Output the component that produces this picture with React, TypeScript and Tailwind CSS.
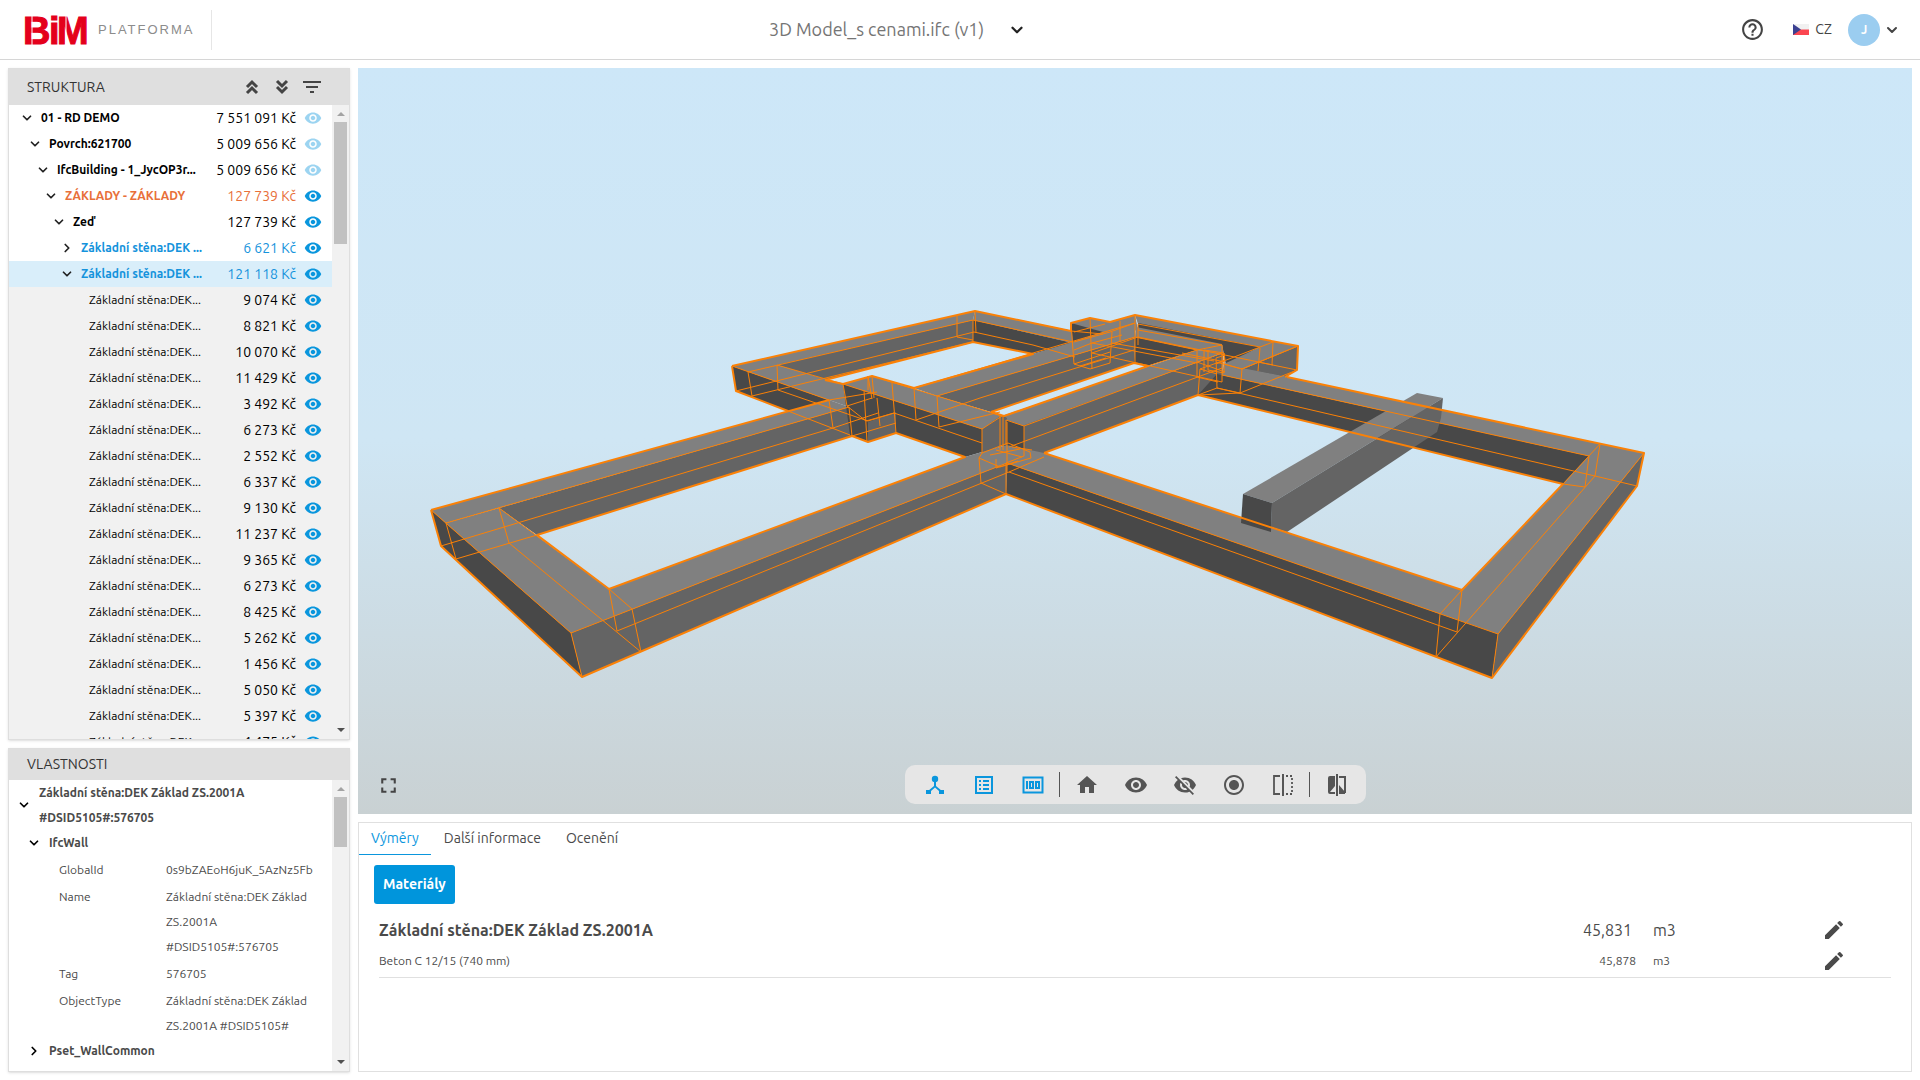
import { useState } from 'react';
import clsx from 'clsx';
import { ChevronDown, ChevronRight } from 'lucide-react';
import {
    MdEdit,
    MdFilterList,
    MdFullscreen,
    MdHelpOutline,
    MdHome,
    MdRadioButtonChecked,
    MdVisibility,
    MdVisibilityOff,
} from 'react-icons/md';

type TreeItem = {
    name: string;
    price: string;
    level: number;
    open?: boolean;
    tone?: 'orange' | 'blue';
    faded?: boolean;
    selected?: boolean;
};

const tree: TreeItem[] = [
    { name: '01 - RD DEMO', price: '7 551 091 Kč', level: 0, open: true, faded: true },
    { name: 'Povrch:621700', price: '5 009 656 Kč', level: 1, open: true, faded: true },
    { name: 'IfcBuilding - 1_JycOP3r...', price: '5 009 656 Kč', level: 2, open: true, faded: true },
    { name: 'ZÁKLADY - ZÁKLADY', price: '127 739 Kč', level: 3, open: true, tone: 'orange' },
    { name: 'Zeď', price: '127 739 Kč', level: 4, open: true },
    { name: 'Základní stěna:DEK ...', price: '6 621 Kč', level: 5, open: false, tone: 'blue' },
    { name: 'Základní stěna:DEK ...', price: '121 118 Kč', level: 5, open: true, tone: 'blue', selected: true },
];

const walls = [
    '9 074', '8 821', '10 070', '11 429', '3 492', '6 273', '2 552', '6 337', '9 130',
    '11 237', '9 365', '6 273', '8 425', '5 262', '1 456', '5 050', '5 397', '4 475',
];

const indents = ['pl-[9px]', 'pl-[17px]', 'pl-[25px]', 'pl-[33px]', 'pl-[41px]', 'pl-[49px]'];

const properties = [
    { label: 'GlobalId', lines: ['0s9bZAEoH6juK_5AzNz5Fb'] },
    { label: 'Name', lines: ['Základní stěna:DEK Základ', 'ZS.2001A', '#DSID5105#:576705'] },
    { label: 'Tag', lines: ['576705'] },
    { label: 'ObjectType', lines: ['Základní stěna:DEK Základ', 'ZS.2001A #DSID5105#'] },
];

function Logo() {
    return (
        <svg width="62" height="32" viewBox="0 0 62 32" className="overflow-visible" role="img" aria-label="BiM">
            <text
                x="-1 25 33"
                y="30"
                fontFamily="'Liberation Sans', sans-serif"
                fontWeight="700"
                fontSize="38"
                fill="#e4001b"
                stroke="#e4001b"
                strokeWidth="1"
            >
                BiM
            </text>
            <path d="M8 0v32M42 0v32" stroke="#fff" strokeWidth="1" />
        </svg>
    );
}

function Flag() {
    return (
        <svg width="16" height="11" viewBox="0 0 16 11">
            <path fill="#f1f1f1" d="M0 0h16v6H0z" />
            <path fill="#fb4650" d="M0 5.5h16V11H0z" />
            <path fill="#3c4191" d="M0 0l8 5.5L0 11z" />
        </svg>
    );
}

function Header() {
    return (
        <header className="flex h-[60px] shrink-0 items-center border-b border-[#d6d6d6] bg-white px-5">
            <div className="flex flex-1 items-center">
                <a href="#" className="flex items-center gap-2 pl-1 text-[#8c8c8c]">
                    <Logo />
                    <span className="pl-1 font-['Liberation_Sans',sans-serif] text-[13px] tracking-[2px]">PLATFORMA</span>
                </a>
                <div className="ml-4 h-10 w-px bg-[#e6e6e6]" />
            </div>
            <button className="flex w-[382px] items-center gap-6 text-[18px] text-[#757575]">
                3D Model_s cenami.ifc (v1)
                <ChevronDown size={18} strokeWidth={3} className="text-[#222]" />
            </button>
            <div className="flex flex-1 items-center justify-end text-[#444]">
                <button aria-label="Nápověda">
                    <MdHelpOutline size={25} />
                </button>
                <button className="ml-7 flex items-center gap-[6px] text-[14px]">
                    <Flag />
                    CZ
                </button>
                <button className="ml-4 flex items-center gap-1">
                    <span className="flex size-8 items-center justify-center rounded-full bg-[#9bcdf0] text-[12px] font-bold text-white">
                        J
                    </span>
                    <ChevronDown size={16} strokeWidth={3} />
                </button>
            </div>
        </header>
    );
}

function Scrollbar({ thumb }: { thumb: string }) {
    return (
        <div className="flex w-[17px] shrink-0 flex-col items-center bg-[#f1f1f1]">
            <svg width="17" height="17" viewBox="0 0 17 17" className="shrink-0">
                <path fill="#a3a3a3" d="M5 11h8L9 7z" />
            </svg>
            <div className={clsx('w-[13px] shrink-0 bg-[#c1c1c1]', thumb)} />
            <div className="flex-1" />
            <svg width="17" height="17" viewBox="0 0 17 17" className="shrink-0">
                <path fill="#505050" d="M5 6h8l-4 4z" />
            </svg>
        </div>
    );
}

function TreeRow({ item }: { item: TreeItem }) {
    const Chevron = item.open ? ChevronDown : ChevronRight;
    return (
        <li
            className={clsx(
                'flex h-[26px] shrink-0 items-center pr-[10px]',
                indents[item.level],
                item.selected && 'bg-[#d9eefa]',
                item.tone === 'orange' && 'text-[#e8703a]',
                item.tone === 'blue' && 'text-[#1593dc]',
                !item.tone && 'text-black',
            )}
        >
            <button className="flex w-[23px] pl-[2px] text-[#222]" aria-label="Rozbalit">
                <Chevron size={14} strokeWidth={3} />
            </button>
            <span className="flex-1 text-[12px] font-bold whitespace-nowrap">{item.name}</span>
            <span className="text-[14px] whitespace-nowrap">{item.price}</span>
            <button className={clsx('ml-2 text-[#0a96dd]', item.faded && 'opacity-40')} aria-label="Zobrazit">
                <MdVisibility size={18} />
            </button>
        </li>
    );
}

function DoubleArrow({ up }: { up?: boolean }) {
    return (
        <svg width="24" height="24" viewBox="0 0 24 24" fill="none" stroke="currentColor" strokeWidth="3">
            <path d={up ? 'M7 12l5-5 5 5M7 18l5-5 5 5' : 'M7 6l5 5 5-5M7 12l5 5 5-5'} />
        </svg>
    );
}

function StructurePanel() {
    return (
        <section className="flex min-h-0 flex-1 flex-col border border-[#dedede] bg-white shadow-sm">
            <div className="flex h-9 shrink-0 items-center bg-[#dfdfdf] pr-[25px] pl-[18px] text-[#333]">
                <h2 className="flex-1 text-[14px]">STRUKTURA</h2>
                <div className="flex items-center gap-[6px] text-[#444]">
                    <button aria-label="Sbalit vše">
                        <DoubleArrow up />
                    </button>
                    <button aria-label="Rozbalit vše">
                        <DoubleArrow />
                    </button>
                    <button aria-label="Filtr">
                        <MdFilterList size={24} />
                    </button>
                </div>
            </div>
            <div className="flex min-h-0 flex-1">
                <ul className="flex min-w-0 flex-1 flex-col overflow-hidden">
                    {tree.map((item, i) => (
                        <TreeRow key={i} item={item} />
                    ))}
                    {walls.map((price, i) => (
                        <li
                            key={i}
                            className="flex h-[26px] shrink-0 items-center bg-[#f1f1f1] pr-[10px] pl-20 text-black"
                        >
                            <span className="flex-1 text-[12px] whitespace-nowrap">Základní stěna:DEK...</span>
                            <span className="text-[14px] whitespace-nowrap">{price} Kč</span>
                            <button className="ml-2 text-[#0a96dd]" aria-label="Zobrazit">
                                <MdVisibility size={18} />
                            </button>
                        </li>
                    ))}
                </ul>
                <Scrollbar thumb="h-[122px]" />
            </div>
        </section>
    );
}

function PropertiesPanel() {
    return (
        <section className="flex h-[324px] shrink-0 flex-col border border-[#dedede] bg-white text-[12px] text-[#4a4a4a] shadow-sm">
            <div className="flex h-[31px] shrink-0 items-center bg-[#dfdfdf] pl-[18px] text-[#333]">
                <h2 className="text-[14px]">VLASTNOSTI</h2>
            </div>
            <div className="flex min-h-0 flex-1">
                <div className="min-w-0 flex-1 overflow-hidden leading-[25px]">
                    <div className="flex items-center gap-2 pl-2 font-bold">
                        <ChevronDown size={14} strokeWidth={3} className="text-black" />
                        <span>
                            Základní stěna:DEK Základ ZS.2001A
                            <br />
                            #DSID5105#:576705
                        </span>
                    </div>
                    <div className="flex items-center gap-2 pl-[18px] font-bold">
                        <ChevronDown size={14} strokeWidth={3} className="text-black" />
                        IfcWall
                    </div>
                    <dl>
                        {properties.map((property) => (
                            <div key={property.label} className="flex pt-[2px] pl-[50px]">
                                <dt className="w-[107px] shrink-0">{property.label}</dt>
                                <dd>
                                    {property.lines.map((line) => (
                                        <div key={line} className="whitespace-nowrap">
                                            {line}
                                        </div>
                                    ))}
                                </dd>
                            </div>
                        ))}
                    </dl>
                    <div className="flex items-center gap-2 pl-[18px] font-bold">
                        <ChevronRight size={14} strokeWidth={3} className="text-black" />
                        Pset_WallCommon
                    </div>
                </div>
                <Scrollbar thumb="h-[50px]" />
            </div>
        </section>
    );
}

// Foundation walls, faces are painted from the back to the front
const faces: [string, string][] = [
    // back left room
    ['#808080', '732,366 975,311 973,320 748,372'],
    ['#646464', '777,365 973,320 973,342 825,380'],
    ['#808080', '975,311 1073,331 1078,341 1073,343 973,320'],
    ['#484848', '973,320 1073,343 1033,354 973,342'],
    ['#484848', '732,366 829,400 788,411 736,391'],
    ['#808080', '732,366 777,365 845,385 852,408 829,400'],
    // back right room
    ['#808080', '1071,323 1090,318 1110,322 1135,315 1138,330 1073,343'],
    ['#484848', '1071,323 1103,332 1073,342'],
    ['#808080', '1135,315 1298,346 1260,348 1138,324'],
    ['#484848', '1138,323 1260,347 1226,365 1222,345 1138,330'],
    ['#808080', '1136,327 1222,344 1224,354 1197,350 1135,337'],
    ['#484848', '1135,337 1197,350 1147,366 1134,363'],
    ['#808080', '1260,347 1273,342 1298,346 1242,369 1224,364'],
    ['#646464', '1298,346 1297,370 1285,377 1242,369'],
    // long middle walls
    ['#808080', '914,388 1033,354 1135,323 1135,337 937,396'],
    ['#646464', '937,396 1135,337 1134,363 991,412'],
    ['#808080', '1002,416 1197,350 1222,353 1024,426 1004,420'],
    ['#646464', '1022,426 1223,353 1222,383 1198,395 1044,453 1024,456'],
    ['#484848', '1004,419 1024,426 1024,452 1004,446'],
    // long left wall
    ['#808080', '431,510 829,400 849,407 446,523'],
    ['#646464', '499,508 849,407 852,436 537,535'],
    // central cross wall
    ['#808080', '843,384 872,376 1002,416 982,429'],
    ['#484848', '843,384 982,429 982,452 965,457 896,433 868,442 850,435'],
    ['#646464', '868,422 896,412 896,433 868,442'],
    ['#646464', '982,429 1002,415 1007,418 1006,445 982,453'],
    // right room
    ['#808080', '1224,364 1242,368 1287,377 1644,453 1589,456 1222,375'],
    ['#484848', '1217,374 1589,456 1563,484 1198,395'],
    ['#808080', '1600,444 1644,453 1498,634 1440,614 1462,590 1563,484'],
    ['#646464', '1644,453 1637,486 1492,678 1498,634'],
    ['#808080', '1006,445 1044,453 1462,590 1498,634 1007,463'],
    ['#484848', '1007,463 1498,634 1492,678 1006,494'],
    // left room
    ['#808080', '431,510 446,523 499,508 609,589 632,609 571,633'],
    ['#484848', '431,510 571,633 582,677 441,546'],
    ['#808080', '609,589 965,457 982,452 1007,445 1007,463 571,633'],
    ['#646464', '571,633 1007,463 1006,494 582,677'],
    // loose beam
    ['#808080', '1243,494 1417,393 1443,398 1272,503'],
    ['#646464', '1272,503 1443,398 1441,418 1437,432 1287,532 1271,527'],
    ['#484848', '1243,494 1272,503 1271,532 1241,523'],
];

const outlines = [
    'M431 510L829 400M431 510L441 546L582 677L1006 494L1492 678L1637 486L1644 453L1287 377',
    'M537 535L852 436L868 442L896 433L965 457L609 589L537 535',
    'M732 366L975 311L1071 331V323L1090 318L1110 322L1135 315L1298 346L1297 370L1285 377',
    'M732 366L736 391L788 411M825 380L973 342L1033 354L914 388L872 376L843 384L825 380',
    'M991 412L1134 363L1148 366L1004 416L991 412',
    'M1044 453L1198 395L1563 484L1462 590L1044 453',
];

const edges = [
    // left room
    'M431 510L571 633L1007 463M571 633L582 677M446 523L849 407M446 523L456 559M499 508L609 589L632 609L641 652M499 508L509 543L641 652',
    'M441 546L833 428L878 413M456 559L537 535M609 589L617 631L1009 472',
    // right room
    'M1007 463L1498 634L1644 453M1498 634L1492 678M1440 614L1462 590L1457 632M1440 614L1436 657L1595 476L1637 486',
    'M1563 484L1600 444L1595 476M1589 456L1585 487L1563 484M1589 456L1222 375M1595 476L1217 388M1009 472L1457 632',
    // back left room
    'M748 372L973 320L1073 342M748 372L752 396L973 342M777 365L778 390L868 421M777 365L843 384M732 366L829 400L833 428',
    'M736 391L974 332L1033 345M957 315V337L973 340M975 311L976 333M973 320V342M788 411L850 435',
    // central cross wall
    'M843 384L982 429L1002 416M872 376L1002 416M843 384L847 406L872 398M982 429V453M868 376L872 399M872 376L874 398M829 400L877 392',
    'M892 383L896 433M914 388L916 420M937 396L939 427L1000 412M877 398L880 426M864 390L867 442M849 407L852 436',
    'M847 406L866 421L894 413L982 443M868 376V390M868 421L894 413M852 436L896 423',
    'M982 453L979 458L981 483L1006 494V463L1024 456V426L1006 420V445M1000 416V450M1003 416V450M1007 422V472',
    'M982 453L1008 443L1030 452L1031 458L1000 467L979 458M996 450L1022 457M996 459V468L1018 461M1009 472L1044 457M990 455L1020 449M1012 447L1032 450',
    // long middle walls
    'M937 396L1135 337M916 420L980 398L1134 350M1024 426L1222 353M1009 447L1222 368M914 388L1135 323M1033 345L1075 357M1148 366L1197 350L1222 345',
    // back right room
    'M1071 323L1074 364L1090 369L1110 363L1112 332M1090 318L1092 369M1120 321V342M1135 315V363M1138 324V345M1074 332L1105 324',
    'M1138 324L1260 347M1138 330L1222 345V382M1071 331L1103 334M1074 342L1110 332L1135 323M1092 353L1138 337L1273 365M1092 343L1122 335',
    'M1074 350L1092 343L1197 363M1074 364L1110 352M1092 353L1222 382M1112 343L1214 361M1080 366L1106 358',
    'M1135 337L1197 350V377M1273 342L1272 365M1260 348L1258 371M1298 346L1242 369L1240 393L1198 395L1200 369L1225 360L1224 353L1204 350V372',
    'M1242 369L1224 364M1240 393L1297 370L1258 362M1217 388L1216 358L1225 355M1198 395L1217 388L1240 393M1208 350V370L1224 373V353M1200 369L1217 374M1197 362L1225 372M1197 377L1218 382M1216 362L1242 369L1298 346M1182 353L1225 362',
    'M1273 342L1216 364',
];

function Model() {
    return (
        <svg
            className="block h-full w-full"
            viewBox="358 68 1554 746"
            preserveAspectRatio="xMidYMid slice"
            role="img"
            aria-label="3D model"
        >
            {faces.map(([fill, points], i) => (
                <polygon key={i} fill={fill} points={points} />
            ))}
            <g fill="none" stroke="#fb8106" strokeLinejoin="round">
                <path d={edges.join('')} strokeWidth="1" />
                <path d={outlines.join('')} strokeWidth="2" />
            </g>
        </svg>
    );
}

function StructureIcon() {
    return (
        <svg width="20" height="20" viewBox="0 0 20 20" fill="currentColor">
            <circle cx="10" cy="4" r="3.2" />
            <path d="M9 6h2v5l6 5-1.300 1.400L10 12.600l-5.700 4.800L3 16l6-5z" />
            <path d="M1 15h5v4H1zM14 15h5v4h-5z" />
        </svg>
    );
}

function ListIcon() {
    return (
        <svg width="20" height="20" viewBox="0 0 20 20" fill="none" stroke="currentColor" strokeWidth="2">
            <path d="M2 2h16v16H2zM5 6h2M5 10h2M5 14h2M9 6h6M9 10h6M9 14h6" />
        </svg>
    );
}

function CounterIcon() {
    return (
        <svg width="22" height="18" viewBox="0 0 22 18" fill="none" stroke="currentColor" strokeWidth="2">
            <path d="M1.500 1.500h19v15h-19zM5 5v8M8 6h3v6H8zM14 6h3v6h-3z" />
        </svg>
    );
}

function SectionIcon() {
    return (
        <svg width="20" height="24" viewBox="0 0 20 24" fill="none" stroke="currentColor">
            <path d="M7 3H1v18h6" strokeWidth="1.800" />
            <path d="M10 1v22" strokeWidth="2" />
            <path d="M13 3h6v18h-6" strokeWidth="1.800" strokeDasharray="2 2" />
        </svg>
    );
}

function CompareIcon() {
    return (
        <svg width="20" height="24" viewBox="0 0 20 24" fill="currentColor">
            <path d="M3 3h5v10l-5 6h5v2H3q-2 0-2-2V5q0-2 2-2zM9 1h2v22H9zM12 12l6 7v2h-6z" />
            <path d="M12 4h6v16" fill="none" stroke="currentColor" strokeWidth="2" />
        </svg>
    );
}

const toolGroups = [
    {
        color: 'text-[#0a96dd]',
        tools: [
            { label: 'Struktura', icon: <StructureIcon /> },
            { label: 'Vlastnosti', icon: <ListIcon /> },
            { label: 'Výměry', icon: <CounterIcon /> },
        ],
    },
    {
        color: 'text-[#555]',
        tools: [
            { label: 'Domů', icon: <MdHome size={24} /> },
            { label: 'Zobrazit', icon: <MdVisibility size={24} /> },
            { label: 'Skrýt', icon: <MdVisibilityOff size={24} /> },
            { label: 'Izolovat', icon: <MdRadioButtonChecked size={24} /> },
            { label: 'Řez', icon: <SectionIcon /> },
        ],
    },
    {
        color: 'text-[#555]',
        tools: [{ label: 'Porovnat', icon: <CompareIcon /> }],
    },
];

function Viewer() {
    return (
        <section className="relative min-h-0 flex-1 overflow-hidden bg-linear-to-b from-[#cde7f8] via-[#cfe6f4] to-[#c9d1d3]">
            <div className="absolute inset-0">
                <Model />
            </div>
            <button className="absolute bottom-4 left-[18px] text-[#444]" aria-label="Celá obrazovka">
                <MdFullscreen size={25} />
            </button>
            <div className="absolute inset-x-0 bottom-[10px] flex justify-center">
                <div className="flex h-[39px] items-center rounded-[10px] bg-[#e6e6e6] pr-1 pl-[6px]">
                    {toolGroups.map((group, i) => (
                        <div key={i} className={clsx('flex items-center', group.color)}>
                            {i > 0 && <div className="mr-[3px] ml-px h-[25px] w-px bg-[#555]" />}
                            {group.tools.map((tool) => (
                                <button
                                    key={tool.label}
                                    aria-label={tool.label}
                                    className="flex w-[49px] items-center justify-center"
                                >
                                    {tool.icon}
                                </button>
                            ))}
                        </div>
                    ))}
                </div>
            </div>
        </section>
    );
}

const tabs = ['Výměry', 'Další informace', 'Ocenění'];

function DetailPanel() {
    const [active, setActive] = useState(tabs[0]);

    return (
        <section className="h-[250px] shrink-0 border border-[#e0e0e0] bg-white text-[#4a4a4a]">
            <div className="flex h-8 gap-px" role="tablist">
                {tabs.map((tab) => (
                    <button
                        key={tab}
                        role="tab"
                        aria-selected={tab === active}
                        onClick={() => setActive(tab)}
                        className={clsx(
                            'border-b px-3 text-[14px]',
                            tab === active ? 'border-[#0a96dd] text-[#0a96dd]' : 'border-transparent',
                        )}
                    >
                        {tab}
                    </button>
                ))}
            </div>
            <div className="px-[15px] pt-[10px]">
                <button className="h-[39px] rounded-[3px] bg-[#0095dc] px-[9px] text-[14px] font-bold text-white">
                    Materiály
                </button>
            </div>
            <div className="px-5">
                <table className="mt-[11px] w-full border-b border-[#e0e0e0] text-left">
                    <tbody>
                        <tr className="h-[30px] text-[16px]">
                            <th>Základní stěna:DEK Základ ZS.2001A</th>
                            <td className="w-[120px] pr-[21px] text-right">45,831</td>
                            <td className="w-[169px]">m3</td>
                            <td className="w-[69px]">
                                <button className="flex" aria-label="Upravit">
                                    <MdEdit size={24} />
                                </button>
                            </td>
                        </tr>
                        <tr className="h-8 text-[12px]">
                            <td>Beton C 12/15 (740 mm)</td>
                            <td className="pr-[17px] text-right">45,878</td>
                            <td>m3</td>
                            <td>
                                <button className="flex" aria-label="Upravit">
                                    <MdEdit size={24} />
                                </button>
                            </td>
                        </tr>
                    </tbody>
                </table>
            </div>
        </section>
    );
}

export default function App() {
    return (
        <div className="flex h-screen flex-col bg-white font-['Ubuntu','Noto_Sans',sans-serif]">
            <Header />
            <main className="flex min-h-0 flex-1 gap-2 p-2">
                <aside className="flex w-[342px] shrink-0 flex-col gap-2">
                    <StructurePanel />
                    <PropertiesPanel />
                </aside>
                <div className="flex min-w-0 flex-1 flex-col gap-2">
                    <Viewer />
                    <DetailPanel />
                </div>
            </main>
        </div>
    );
}
